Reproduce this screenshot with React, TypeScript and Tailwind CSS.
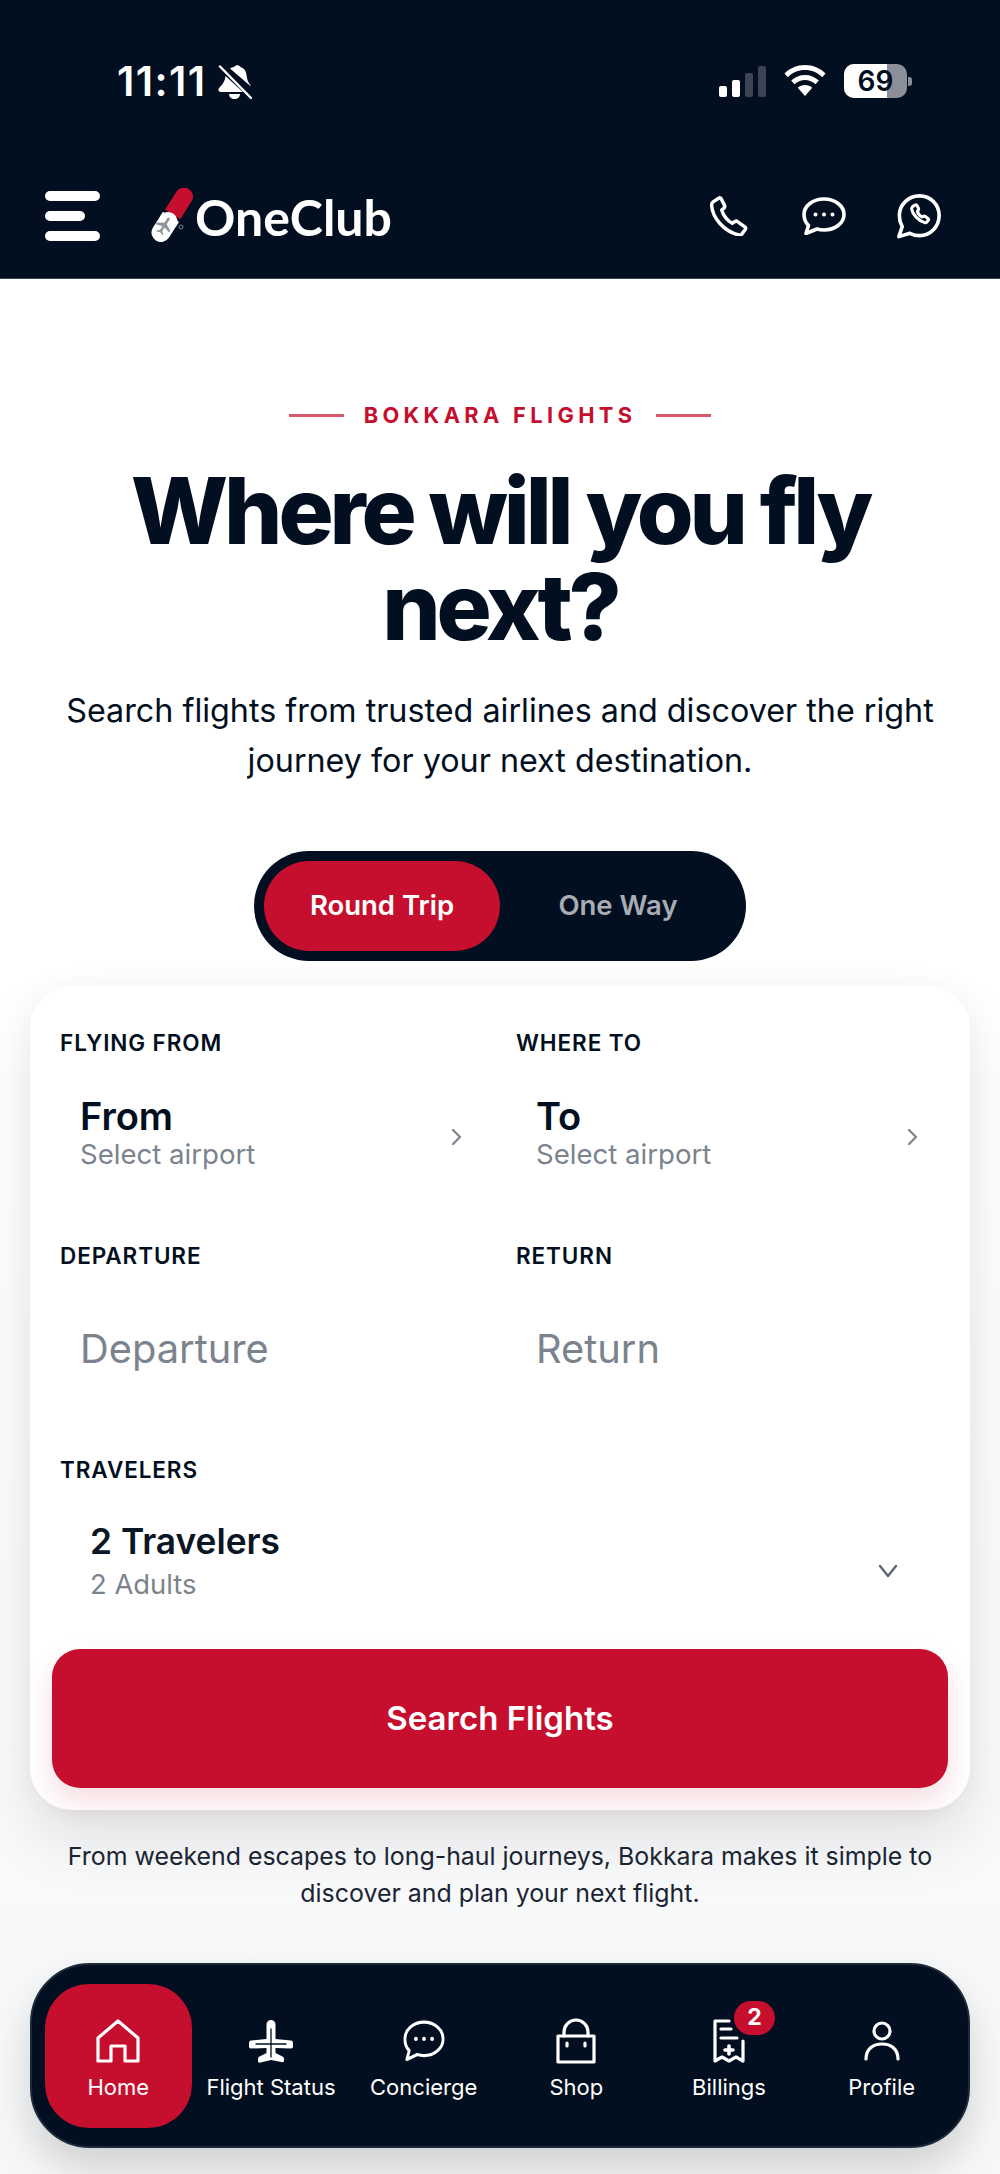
import React from "react";

const font = { fontFamily: "Inter, 'Liberation Sans', sans-serif" };

function Bell() {
  return (
    <svg width="34" height="36" viewBox="0 0 34 36" fill="none">
      <path d="M16 3c2-2.400 5-2 6.500 0 5 1.500 6 6 6.500 11 .3 3.500 3 6 4 8.500L12 4.500C13 3.800 14.500 3.300 16 3z" fill="#fff" />
      <path d="M7.500 12 25 28H3.500C.5 28-.5 25.500 1.500 23.500 5 20 7 17 7.500 12z" fill="#fff" />
      <path d="M11 30h11c0 3-2.500 5-5.500 5S11 33 11 30z" fill="#fff" />
      <path d="M2 2.500 33 34" stroke="#fff" strokeWidth="2.400" strokeLinecap="round" />
    </svg>
  );
}

function Signal() {
  return (
    <div className="flex items-end gap-[5px]">
      <div className="h-[11px] w-[8px] rounded-[2px] bg-white" />
      <div className="h-[17px] w-[8px] rounded-[2px] bg-white" />
      <div className="h-[24px] w-[8px] rounded-[2px] bg-[#3a4452]" />
      <div className="h-[31px] w-[8px] rounded-[2px] bg-[#3a4452]" />
    </div>
  );
}

function Wifi() {
  return (
    <svg width="42" height="32" viewBox="0 0 42 32" fill="#fff">
      <path d="M21 0c8 0 15 3 20.500 8.500l-3.300 3.700C33.500 7.500 27.500 5 21 5S8.500 7.500 3.800 12.200L.5 8.500C6 3 13 0 21 0z" />
      <path d="M21 10c5.200 0 10 2 13.800 5.600l-3.300 3.700C28.700 16.600 25 15 21 15s-7.700 1.600-10.500 4.300l-3.300-3.700C11 12 15.800 10 21 10z" />
      <path d="M21 20c2.800 0 5.300 1 7.200 2.800L21 31l-7.200-8.200C15.700 21 18.200 20 21 20z" />
    </svg>
  );
}

function Battery() {
  return (
    <div className="flex items-center gap-[1px]">
      <div className="relative flex h-[34px] w-[63px] items-center justify-center overflow-hidden rounded-[10px] bg-[#8a8f98]">
        <div className="absolute inset-y-0 left-0 w-[43px] bg-white" />
        <span className="relative text-[28px] font-semibold leading-none text-[#020f20]">69</span>
      </div>
      <div className="h-[9px] w-[4px] rounded-r-[3px] bg-[#8a8f98]" />
    </div>
  );
}

function Logo() {
  return (
    <div className="flex items-center">
      <svg width="42" height="56" viewBox="0 0 42 56" fill="none">
        <path d="M33 8.500 26 19.500" stroke="#c60f2e" strokeWidth="18" strokeLinecap="round" />
        <path d="M26 19.500 21.600 26.400" stroke="#c60f2e" strokeWidth="18" />
        <path d="M10 44.500 17 33.500" stroke="#fff" strokeWidth="19" strokeLinecap="round" />
        <path d="M17 33.500 20 28.800" stroke="#fff" strokeWidth="19" />
        <g transform="translate(13 38) rotate(32)">
          <path d="M-1.300-8.500c0-1.800 2.600-1.800 2.600 0V-3l6.700 3.800v2L1.300 1v4.500l2.500 1.800v1.300L0 7.500-3.800 8.600V7.300l2.500-1.800V1l-6.700 1.800v-2L-1.300-3z" fill="#8f959c" />
        </g>
        <circle cx="30" cy="39" r="2" stroke="#7b838d" strokeWidth="1" />
      </svg>
      <span className="ml-[2px] mt-[2px] text-[50px] font-bold leading-none text-white" style={{ fontFamily: "Lato, sans-serif" }}>
        OneClub
      </span>
    </div>
  );
}

function PhoneIcon() {
  return (
    <svg width="39" height="40" viewBox="0 0 42 44" fill="none" stroke="#fff" strokeWidth="3.800" strokeLinejoin="round">
      <path d="M3 6.500 9 2.500c1-.6 2.300-.3 3 .8l3.500 7c.5 1 .3 2-.5 2.800l-2.500 2.400c1.500 6 6.500 12 11.500 14.500l3-2c1-.6 2-.6 2.800.1l8 5.800c1 .8 1.200 2 .5 3l-3.800 5c-.8 1-2 1.300-3.200 1C15 39 2 24 1.300 10c0-1.500.6-2.700 1.700-3.500z" />
    </svg>
  );
}

function ChatIcon({ w, h, sw }: { w: number; h: number; sw: number }) {
  return (
    <svg width={w} height={h} viewBox="0 0 44 38" fill="none" preserveAspectRatio="none">
      <path d="M22 2c11 0 20 6.800 20 15.500S33 33 22 33c-2.500 0-5-.4-7-1l-11 4.500 2.500-8C3.500 25.500 2 21.500 2 17.500 2 8.800 11 2 22 2z" stroke="#fff" strokeWidth={sw} strokeLinejoin="round" />
      <circle cx="13.500" cy="17.500" r="2" fill="#fff" />
      <circle cx="22" cy="17.500" r="2" fill="#fff" />
      <circle cx="30.500" cy="17.500" r="2" fill="#fff" />
    </svg>
  );
}

function WhatsIcon() {
  return (
    <svg width="46" height="47" viewBox="0 0 48 48" fill="none">
      <path d="M24.500 2.500c11.500 0 20.500 9 20.500 20.500s-9 21-20.500 21c-3.500 0-7-1-10-2.500L3 45l3.500-10.500C4.500 31 3.500 27 3.500 23 3.500 11.500 13 2.500 24.500 2.500z" stroke="#fff" strokeWidth="3.800" strokeLinejoin="round" />
      <path d="M17.500 13.500 20 12c.8-.4 1.500-.2 1.900.5l1.600 3.200c.3.700.2 1.300-.3 1.800l-1 1c.8 2.500 3 5 5 6l1.300-.8c.6-.4 1.200-.3 1.800.1l3 2.200c.7.500.8 1.300.3 2l-1.400 1.700c-.6.800-1.500 1-2.400.7-6.500-2-12.500-8.500-13.500-14.200-.2-.9.300-1.700 1-2.200z" stroke="#fff" strokeWidth="3.200" strokeLinejoin="round" />
    </svg>
  );
}

function Header() {
  return (
    <header className="flex h-[279px] flex-col border-b border-[#3d4656] bg-[#020f20]">
      <div className="flex h-[162px] items-start justify-between pl-[117px] pr-[88px] pt-[64px]">
        <div className="flex items-center gap-[11px]">
          <span className="mt-[-2px] text-[41px] font-semibold leading-[34px] tracking-[0.035em] text-white">11:11</span>
          <Bell />
        </div>
        <div className="flex h-[34px] items-center gap-[18px]">
          <Signal />
          <Wifi />
          <Battery />
        </div>
      </div>
      <div className="flex flex-1 items-center pb-[8px] pl-[45px] pr-[58px]">
        <div className="flex w-[55px] flex-col gap-[10px]">
          <div className="h-[10px] w-[55px] rounded-full bg-white" />
          <div className="h-[10px] w-[40px] rounded-full bg-white" />
          <div className="h-[10px] w-[55px] rounded-full bg-white" />
        </div>
        <div className="ml-[51px]"><Logo /></div>
        <div className="ml-auto flex items-center">
          <PhoneIcon />
          <div className="ml-[53px]"><ChatIcon w={44} h={38} sw={3.6} /></div>
          <div className="ml-[50px]"><WhatsIcon /></div>
        </div>
      </div>
    </header>
  );
}

function Hero() {
  return (
    <section className="flex flex-col items-center px-[30px] pt-[124px] text-center">
      <div className="flex items-center gap-[20px]">
        <div className="h-[3px] w-[55px] bg-[#c60f2e] opacity-70" />
        <span className="text-[21.800px] font-bold leading-[24px] tracking-[0.2em] text-[#c60f2e]">BOKKARA FLIGHTS</span>
        <div className="h-[3px] w-[55px] bg-[#c60f2e] opacity-70" />
      </div>
      <h1 className="mt-[36px] text-[92px] font-extrabold leading-[96px] tracking-[-0.045em] text-[#020f20]">
        Where will you fly<br />next?
      </h1>
      <p className="mt-[31px] text-[32.300px] leading-[50px] text-[#020f20]">
        Search flights from trusted airlines and discover the right<br />journey for your next destination.
      </p>
    </section>
  );
}

function Toggle() {
  return (
    <div className="mx-auto mt-[65px] flex h-[110px] w-[492px] items-center rounded-full bg-[#020f20] px-[10px]">
      <div className="flex h-[90px] w-[236px] items-center justify-center rounded-full bg-[#c60f2e] text-[27.500px] font-semibold text-white">Round Trip</div>
      <div className="flex h-[90px] flex-1 items-center justify-center text-[27.500px] font-semibold text-[#a9adb3]">One Way</div>
    </div>
  );
}

function Label({ children }: { children: React.ReactNode }) {
  return <div className="text-[22.500px] font-semibold leading-[28px] tracking-[0.04em] text-[#020f20]">{children}</div>;
}

function Chevron() {
  return (
    <svg width="11" height="18" viewBox="0 0 11 18" fill="none" stroke="#7b838d" strokeWidth="2.200" strokeLinecap="round" strokeLinejoin="round">
      <path d="M2 2l7 7-7 7" />
    </svg>
  );
}

function AirportField({ label, title }: { label: string; title: string }) {
  return (
    <div>
      <Label>{label}</Label>
      <div className="flex items-center justify-between pl-[20px] pr-[22px] pt-[38px]">
        <div>
          <div className="text-[38px] font-semibold leading-[42px] text-[#020f20]">{title}</div>
          <div className="text-[27.600px] leading-[35px] text-[#7b838d]">Select airport</div>
        </div>
        <div className="mt-[6px]"><Chevron /></div>
      </div>
    </div>
  );
}

function DateField({ label, text }: { label: string; text: string }) {
  return (
    <div>
      <Label>{label}</Label>
      <div className="pl-[20px] pt-[54px] text-[39.800px] leading-[50px] text-[#7b838d]">{text}</div>
    </div>
  );
}

function Card() {
  return (
    <section className="mx-[30px] mt-[25px] rounded-[42px] bg-white px-[22px] pb-[22px] pt-[43px] shadow-[0_30px_60px_rgba(2,15,32,0.1),0_0_30px_rgba(2,15,32,0.03)]">
      <div className="grid grid-cols-2 gap-x-[32px] px-[8px]">
        <AirportField label="FLYING FROM" title="From" />
        <AirportField label="WHERE TO" title="To" />
      </div>
      <div className="mt-[70px] grid grid-cols-2 gap-x-[32px] px-[8px]">
        <DateField label="DEPARTURE" text="Departure" />
        <DateField label="RETURN" text="Return" />
      </div>
      <div className="mt-[82px] px-[8px]">
        <Label>TRAVELERS</Label>
        <div className="flex items-center justify-between pl-[30px] pr-[42px] pt-[37px]">
          <div>
            <div className="text-[35.300px] font-semibold leading-[42px] text-[#0b1624]">2 Travelers</div>
            <div className="mt-[3px] text-[27.400px] leading-[36px] text-[#7b838d]">2 Adults</div>
          </div>
          <svg width="20" height="14" viewBox="0 0 20 14" fill="none" stroke="#5d6672" strokeWidth="2.400" strokeLinecap="round" strokeLinejoin="round" className="mt-[18px]">
            <path d="M2 2l8 10 8-10" />
          </svg>
        </div>
      </div>
      <button className="mt-[47px] flex h-[139px] w-full items-center justify-center rounded-[28px] bg-[#c60f2e] text-[33px] font-semibold text-white shadow-[0_14px_30px_rgba(198,15,46,0.14)]">
        Search Flights
      </button>
    </section>
  );
}

function NavItem({ icon, label, active, badge }: { icon: React.ReactNode; label: string; active?: boolean; badge?: string }) {
  return (
    <div className={`relative flex h-[144px] flex-col items-center rounded-[44px] pt-[34px] ${active ? "bg-[#c60f2e]" : ""}`}>
      <div className="relative flex h-[46px] w-[50px] items-center justify-center">
        {icon}
        {badge && (
          <span className="absolute left-[30px] top-[-17px] flex h-[34px] w-[41px] items-center justify-center rounded-full bg-[#c60f2e] text-[23px] font-bold text-white">{badge}</span>
        )}
      </div>
      <span className="mt-[8px] whitespace-nowrap text-[22px] leading-[30px] text-white">{label}</span>
    </div>
  );
}

const stroke = { fill: "none", stroke: "#fff", strokeWidth: 3.2, strokeLinejoin: "round" as const, strokeLinecap: "round" as const };

function BottomNav() {
  return (
    <nav className="mx-[30px] mt-[51px] grid h-[185px] grid-cols-6 items-center gap-[6px] rounded-[60px] border-2 border-[#1c2a3a] bg-[#020f20] px-[13px] shadow-[0_20px_40px_rgba(0,0,0,0.16)]">
      <NavItem active label="Home" icon={
        <svg width="44" height="44" viewBox="0 0 44 44" {...stroke}><path d="M22 2 42 19v23H29V27H15v15H2V19z" /></svg>
      } />
      <NavItem label="Flight Status" icon={
        <svg width="44" height="44" viewBox="0 0 44 44" fill="#fff">
          <path d="M17.500 5.500c0-6 9-6 9 0V20l15.500 1.500c1.500.2 2 1.200 2 3v3c0 1.200-.8 2-2 2L26.500 29v5l7 3.500c1 .5 1.500 1.200 1.500 2.500v1.500c0 1.500-1 2-2.500 1.500L22 41l-10.500 2.500c-1.500.5-2.500 0-2.500-1.500V40c0-1.300.5-2 1.500-2.500l7-3.500v-5l-15.500.5c-1.200 0-2-.8-2-2v-3c0-1.800.5-2.800 2-3L17.500 20z" />
          <path d="M22 10v28M7 25h30" stroke="#020f20" strokeWidth="1.300" strokeLinecap="round" />
        </svg>
      } />
      <NavItem label="Concierge" icon={<ChatIcon w={42} h={41} sw={3} />} />
      <NavItem label="Shop" icon={
        <svg width="40" height="46" viewBox="0 0 40 46" {...stroke}><path d="M2 18h36v26H2z" /><path d="M8 18v-4a12 12 0 0 1 24 0v4" /><path d="M11 25v3M29 25v3" /></svg>
      } />
      <NavItem label="Billings" badge="2" icon={
        <svg width="32" height="44" viewBox="0 0 32 44" {...stroke}><path d="M2 2h14M2 2v40l7-4 7 4 7-4 7 4V22" /><path d="M8 10h10M8 19h16" /><path d="M16 27v8M12 31h8" strokeWidth="3.600" /></svg>
      } />
      <NavItem label="Profile" icon={
        <svg width="36" height="40" viewBox="0 0 36 40" {...stroke}><circle cx="18" cy="10" r="8" /><path d="M2 38c0-10 7-15 16-15s16 5 16 15" /></svg>
      } />
    </nav>
  );
}

export default function App() {
  return (
    <div className="h-[2174px] w-[1000px] overflow-hidden bg-gradient-to-b from-white from-50% to-[#f6f7f8]" style={font}>
      <Header />
      <Hero />
      <Toggle />
      <Card />
      <p className="mt-[28px] px-[30px] text-center text-[24.900px] leading-[37px] text-[#1a2433]">
        From weekend escapes to long-haul journeys, Bokkara makes it simple to<br />discover and plan your next flight.
      </p>
      <BottomNav />
    </div>
  );
}
